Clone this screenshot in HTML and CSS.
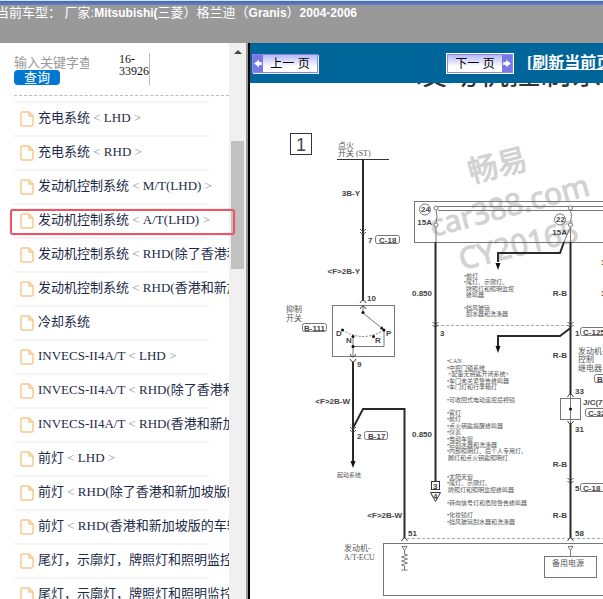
FILE: index.html
```html
<!DOCTYPE html>
<html lang="zh-CN">
<head>
<meta charset="utf-8">
<title>发动机控制系统</title>
<link rel="stylesheet" href="styles.css">
</head>
<body>
<header class="top">
  <h1 class="vehicle">当前车型： 厂家:<strong>Mitsubishi(</strong>三菱）格兰迪（<strong>Granis</strong>）<strong>2004-2006</strong></h1>
</header>
<div class="frames">
  <aside class="sidebar">
    <div class="panel">
      <form class="search">
        <div class="fields">
          <input class="keyword" type="text" placeholder="输入关键字查询" aria-label="关键字">
          <button class="submit" type="button">查询</button>
        </div>
        <p class="code">16-<br>33926</p>
      </form>
      <svg class="defs" width="0" height="0" aria-hidden="true">
        <symbol id="page" viewBox="0 0 14 16"><path d="M2.500 1H9l4 4v8.500a1.500 1.500 0 0 1-1.500 1.500h-9A1.500 1.500 0 0 1 1 13.500v-11A1.500 1.500 0 0 1 2.500 1zM9 1v4h4" fill="none" stroke="#f8c98e" stroke-width="1.500"/></symbol>
      </svg>
      <ul class="list">
        <li><a href="#"><svg class="icon"><use href="#page"/></svg>充电系统 <i>&lt;</i> LHD <i>&gt;</i></a></li>
        <li><a href="#"><svg class="icon"><use href="#page"/></svg>充电系统 <i>&lt;</i> RHD <i>&gt;</i></a></li>
        <li><a href="#"><svg class="icon"><use href="#page"/></svg>发动机控制系统 <i>&lt;</i> M/T(LHD) <i>&gt;</i></a></li>
        <li class="marked"><a href="#"><svg class="icon"><use href="#page"/></svg>发动机控制系统 <i>&lt;</i> A/T(LHD) <i>&gt;</i></a></li>
        <li><a href="#"><svg class="icon"><use href="#page"/></svg>发动机控制系统 <i>&lt;</i> RHD(除了香港和新加坡版的车辆)</a></li>
        <li><a href="#"><svg class="icon"><use href="#page"/></svg>发动机控制系统 <i>&lt;</i> RHD(香港和新加坡版的车辆)</a></li>
        <li><a href="#"><svg class="icon"><use href="#page"/></svg>冷却系统</a></li>
        <li><a href="#"><svg class="icon"><use href="#page"/></svg>INVECS-II4A/T <i>&lt;</i> LHD <i>&gt;</i></a></li>
        <li><a href="#"><svg class="icon"><use href="#page"/></svg>INVECS-II4A/T <i>&lt;</i> RHD(除了香港和新加坡版的车辆)</a></li>
        <li><a href="#"><svg class="icon"><use href="#page"/></svg>INVECS-II4A/T <i>&lt;</i> RHD(香港和新加坡版的车辆)</a></li>
        <li><a href="#"><svg class="icon"><use href="#page"/></svg>前灯 <i>&lt;</i> LHD <i>&gt;</i></a></li>
        <li><a href="#"><svg class="icon"><use href="#page"/></svg>前灯 <i>&lt;</i> RHD(除了香港和新加坡版的车辆)</a></li>
        <li><a href="#"><svg class="icon"><use href="#page"/></svg>前灯 <i>&lt;</i> RHD(香港和新加坡版的车辆)</a></li>
        <li><a href="#"><svg class="icon"><use href="#page"/></svg>尾灯，示廓灯，牌照灯和照明监控</a></li>
        <li><a href="#"><svg class="icon"><use href="#page"/></svg>尾灯，示廓灯，牌照灯和照明监控</a></li>
      </ul>
    </div>
    <div class="scrollbar"><span class="arrow"></span><span class="thumb"></span></div>
  </aside>
  <main class="viewer">
    <nav class="toolbar">
      <a class="pager prev" href="#"><svg class="tip" viewBox="0 0 10 18"><path d="M1 9l5-4v2.500h3v3H6V13z" fill="#fff"/></svg><span>上一 页</span></a>
      <a class="pager next" href="#"><span>下一 页</span><svg class="tip" viewBox="0 0 10 18"><path d="M9 9L4 5v2.500H1v3h3V13z" fill="#fff"/></svg></a>
      <a class="refresh" href="#">[刷新当前页]</a>
    </nav>
    <svg class="diagram" viewBox="250 83 353 516" role="img" aria-label="发动机控制系统电路图">
      <defs>
        <g id="joint"><path d="M-3-3Q0 1 3-3M-3 0Q0 4 3 0" fill="none"/></g>
        <g id="plug"><path d="M-3 2Q0-4 3 2" fill="none"/></g>
        <g id="socket"><path d="M-3-2Q0 4 3-2" fill="none"/></g>
        <path id="head" d="M-2.500 0h5L0 7z"/>
      </defs>
      <text class="title" x="416" y="84">发动机控制系统</text>

      <g class="watermark">
        <text transform="translate(471 183) rotate(-14)">畅易</text>
        <text transform="translate(433 237) rotate(-15)">car388.com</text>
        <text transform="translate(462 270) rotate(-14)">CY20165</text>
      </g>

      <g class="thin">
        <rect class="rule" x="290.500" y="133.500" width="21" height="21"/>
        <path class="rule" d="M337 159.500h52"/>
        <rect x="332.500" y="305.500" width="62" height="51"/>
        <path d="M363 305v8l21 17v16.500h-31M353 336v21"/>
        <path stroke-dasharray="2 1.500" d="M342.500 330Q363 343 384 330"/>
        <rect x="414.500" y="201.500" width="200" height="41"/>
        <path d="M438 206.500h170M438 210.500h170M436 210q2 6 0 12.500M570.500 210q2 6 0 12.500M436 227v15M570.500 227v15M570 228l-6 14"/>
        <path class="dash" d="M436 325.500h134M407 538.500h200"/>
        <rect x="383.500" y="543.500" width="230" height="52"/>
        <rect x="544.500" y="556.500" width="52" height="21"/>
        <rect x="560.500" y="398.500" width="20" height="21"/>
        <path d="M570.500 395v28M570.500 550v6"/>
        <path d="M402 546.500h5l-2.500 4zM404.500 550v4l3 1-6 2 6 2-6 2 6 2-6 2 3 1v4M401.500 570h6M568 546.500h5l-2.500 4z"/>
        <rect class="rule" x="431.500" y="481.500" width="8" height="8"/>
        <path class="rule" d="M430.500 492.500h10l-5 9z"/>
        <circle cx="425" cy="209.500" r="5.500"/><circle cx="560" cy="219.500" r="5.500"/>
        <g class="blank"><circle cx="436" cy="208" r="2"/><circle cx="436" cy="225" r="2"/><circle cx="570.500" cy="208" r="2"/><circle cx="570.500" cy="225" r="2"/></g>
        <rect x="375.500" y="235.500" width="24" height="8" rx="2"/>
        <rect x="302.500" y="323.500" width="24" height="8" rx="2"/>
        <rect x="364.500" y="431.500" width="23" height="8" rx="2"/>
        <rect x="580.500" y="327.500" width="30" height="8" rx="2"/>
        <rect x="594.500" y="374.500" width="30" height="8" rx="2"/>
        <rect x="585.500" y="408.500" width="30" height="8" rx="2"/>
        <rect x="580.500" y="483.500" width="30" height="8" rx="2"/>
      </g>
      <g class="thick">
        <path d="M363 160v141M353 362v100M353 428l10-19h41.500v129M435.500 242v239M570.500 242v153M570.500 423v115"/>
        <path d="M564 242l-4 11h-62v9M570.500 328l-10.500 8h-62v12"/>
      </g>
      <g class="solid">
        <use href="#head" x="353" y="461"/><use href="#head" x="498" y="263"/><use href="#head" x="498" y="346"/>
        <circle cx="363" cy="312.500" r="1.500"/><circle cx="384" cy="330" r="1.500"/><circle cx="342.500" cy="330" r="1.500"/><circle cx="353" cy="336.500" r="1.500"/><circle cx="373.500" cy="336.500" r="1.500"/><circle cx="353" cy="346.500" r="1.500"/><circle cx="570.500" cy="409" r="1.500"/>
        <path d="M384 330l-4-1 2-3z"/>
      </g>
      <g class="marks">
        <use href="#joint" x="363" y="232"/><use href="#joint" x="353" y="430"/><use href="#joint" x="435.500" y="325"/><use href="#joint" x="570.500" y="325"/><use href="#joint" x="570.500" y="481"/>
        <use href="#plug" x="363" y="301"/><use href="#plug" x="363" y="307"/><use href="#socket" x="353" y="356"/><use href="#socket" x="353" y="361"/>
        <use href="#plug" x="404.500" y="539"/><use href="#plug" x="570.500" y="539"/><use href="#plug" x="570.500" y="395"/><use href="#socket" x="570.500" y="423"/>
      </g>

      <g class="wire">
        <text class="sheet" x="296" y="151">1</text>
        <text x="368" y="243">7</text><text x="379" y="243">C-18</text>
        <text x="367" y="301">10</text>
        <text x="304" y="331">B-111</text><text x="336" y="336">D</text><text x="346" y="343">N</text><text x="375" y="343">R</text><text x="386" y="336">P</text>
        <text x="357" y="367">9</text><text x="357" y="439">2</text><text x="368" y="439">B-17</text>
        <text x="408" y="536">51</text>
        <text x="421" y="212">24</text><text x="556" y="222">22</text>
        <text x="440" y="336">3</text><text x="433" y="489">3</text><text x="433" y="499">4</text>
        <text x="601" y="265">1</text><text x="601" y="296">1</text><text x="575" y="336">1</text><text x="583" y="335">C-125</text><text x="597" y="382">B-2</text>
        <text x="575" y="394">33</text><text x="583" y="405">J/C(7)</text><text x="588" y="416">C-32</text><text x="575" y="432">31</text>
        <text x="575" y="491">5</text><text x="583" y="491">C-18</text><text x="575" y="536">58</text>
        <g class="before">
          <text x="360" y="196">3B-Y</text><text x="360" y="274">&lt;F&gt;2B-Y</text><text x="350" y="404">&lt;F&gt;2B-W</text><text x="402" y="518">&lt;F&gt;2B-W</text>
          <text x="432" y="225">15A</text><text x="567" y="235">15A</text><text x="432" y="296">0.850</text><text x="432" y="437">0.850</text>
          <text x="567" y="296">R-B</text><text x="567" y="358">R-B</text><text x="567" y="467">R-B</text><text x="567" y="518">R-B</text>
        </g>
      </g>
      <g class="label">
        <text x="338" y="148">点火</text><text x="338" y="156">开关 (ST)</text>
        <text x="286" y="312">抑制</text><text x="286" y="321">开关</text>
        <text x="344" y="551">发动机-</text><text x="344" y="560">A/T-ECU</text>
        <text x="578" y="354">发动机-</text><text x="578" y="362">控制</text><text x="578" y="371">继电器</text>
        <text x="552" y="566">备用电源</text>
      </g>
      <g class="note">
        <text x="337" y="477">起动系统</text>
        <text x="464" y="278">•前灯</text><text x="464" y="284">•尾灯、示廓灯、</text><text x="466" y="291">牌照灯和照明监控</text><text x="466" y="297">蜂鸣器</text>
        <text x="464" y="310">•挡风玻璃</text><text x="466" y="316">刮水器和洗涤器</text>
        <text x="447" y="363">•CAN</text><text x="447" y="370">•中控门锁系统</text><text x="448" y="376">&lt;配备无钥匙开闭系统&gt;</text><text x="447" y="383">•车门未关紧警告蜂鸣器</text><text x="447" y="389">•车门灯和行李箱灯</text>
        <text x="447" y="402">•可收回式电动遥控后视镜</text>
        <text x="447" y="415">•雾灯</text><text x="447" y="421">•前灯</text><text x="447" y="428">•点火钥匙提醒蜂鸣器</text><text x="447" y="434">•仪表</text><text x="447" y="441">•电动车窗</text><text x="447" y="447">•后刮水器和洗涤器</text><text x="447" y="453">•内部照明灯、后个人专用灯、</text><text x="448" y="460">脚灯和点火钥匙照明灯</text>
        <text x="447" y="479">•太阳天窗</text><text x="447" y="485">•尾灯、示廓灯、</text><text x="448" y="492">牌照灯和照明监控蜂鸣器</text>
        <text x="447" y="505">•转向信号灯和危险警告蜂鸣器</text>
        <text x="447" y="517">•化妆镜灯</text><text x="447" y="524">•挡风玻璃刮水器和洗涤器</text>
      </g>
    </svg>
  </main>
</div>
</body>
</html>
```
FILE: styles.css
```css
* { box-sizing: border-box; }

body {
  margin: 0;
  height: 100vh;
  display: flex;
  flex-direction: column;
  overflow: hidden;
  background: #fff;
  font-family: "Liberation Serif", "Noto Sans CJK SC", serif;
}

.top {
  flex: none;
  height: 43px;
  border-top: 1px solid #d5e2f5;
  background: linear-gradient(#4468b4, #6482c4) no-repeat 0 0 / 100% 4px, #999;
  overflow: hidden;
}

.vehicle {
  margin: 4px 0 0 -4px;
  color: #fff;
  font: 13px/16px "Liberation Sans", "Noto Sans CJK SC", sans-serif;
  white-space: nowrap;
}

.vehicle strong { font-size: 12px; }

.frames {
  flex: 1;
  min-height: 0;
  display: flex;
}

.sidebar {
  flex: none;
  width: 250px;
  display: flex;
  overflow: hidden;
  border-right: 2px solid #000;
}

.panel {
  flex: 1;
  min-width: 0;
  padding: 10px 0 0 14px;
}

.search {
  display: flex;
  gap: 30px;
  height: 43px;
  border-bottom: 1px dashed #bbb;
}

.fields { width: 75px; }

.keyword {
  display: block;
  width: 100%;
  height: 17px;
  padding: 2px 0 0;
  border: 0;
  outline: 0;
  font: 13px/16px "Liberation Sans", "Noto Sans CJK SC", sans-serif;
}

.keyword::placeholder { color: #999; }

.submit {
  display: block;
  width: 46px;
  height: 15px;
  padding: 0;
  border: 0;
  border-radius: 4px;
  background: #0078d2;
  color: #fff;
  font: 13px/15px "Liberation Sans", "Noto Sans CJK SC", sans-serif;
}

.code {
  margin: 0;
  height: 32px;
  border-right: 1px solid #bbb;
  color: #111;
  font-size: 12px;
  line-height: 12px;
}

.defs { display: block; }

.list {
  margin: 5px 0 0;
  padding: 0;
  list-style: none;
}

.list li {
  position: relative;
  height: 34px;
  background: linear-gradient(#f4f4f4, #f4f4f4) no-repeat 0 0 / calc(100% - 20px) 2px;
}

.list a {
  display: block;
  height: 34px;
  padding-left: 6px;
  overflow: hidden;
  color: #1c2a48;
  font-size: 13px;
  line-height: 34px;
  text-decoration: none;
  white-space: nowrap;
}

.list i {
  color: #8a8f98;
  font-style: normal;
}

.icon {
  width: 14px;
  height: 16px;
  margin-right: 4px;
  vertical-align: middle;
}

.marked::after {
  content: "";
  position: absolute;
  inset: 6px -6px 2px -4px;
  z-index: 1;
  border: 2px solid #ec5563;
  border-radius: 3px;
  box-shadow: 0 0 1px #ec5563;
  pointer-events: none;
}

.scrollbar {
  flex: none;
  width: 19px;
  padding: 7px 2px 0;
  border-right: 2px solid #999;
  background: #f0f0f0;
}

.arrow {
  display: block;
  width: 8px;
  margin: 0 auto;
  border: 4px solid transparent;
  border-top-width: 0;
  border-bottom-color: #444;
}

.thumb {
  display: block;
  height: 128px;
  margin-top: 87px;
  background: #c1c1c1;
}

.viewer {
  flex: 1;
  min-width: 0;
  overflow: hidden;
}

.toolbar {
  display: flex;
  align-items: center;
  height: 40px;
  padding-left: 2px;
  background: #069;
  white-space: nowrap;
  overflow: hidden;
}

.pager {
  flex: none;
  display: flex;
  width: 66px;
  height: 19px;
  border: 1px solid #8a8ad8;
  background: linear-gradient(#b8b8f8, #fff 70%);
  box-shadow: 1px 1px 0 #e8e8ff;
  color: #000;
  font: 12px/18px "Liberation Sans", "Noto Sans CJK SC", sans-serif;
  text-decoration: none;
}

.pager span {
  flex: 1;
  text-align: center;
}

.tip {
  width: 10px;
  height: 17px;
  background: #7878e8;
}

.next {
  margin-left: 129px;
  outline: 1px solid #fff;
}

.refresh {
  margin-left: 14px;
  color: #fff;
  font: bold 16px/20px "Liberation Serif", "Noto Sans CJK SC", serif;
}

.diagram {
  display: block;
  width: 100%;
  height: auto;
}

.title {
  fill: #333;
  font: 31px "Noto Sans CJK SC", sans-serif;
}

.thin {
  fill: none;
  stroke: #777;
  stroke-width: 1px;
}

.rule { stroke: #333; }
.dash { stroke: #aaa; stroke-dasharray: 3 2; }
.blank { fill: #fff; }
.thick { fill: none; stroke: #2a2a2a; stroke-width: 2px; }
.solid { fill: #111; }
.marks { stroke: #444; stroke-width: 1px; }

.wire {
  fill: #444;
  font: bold 8px "Liberation Sans", sans-serif;
}

.before { text-anchor: end; }

.sheet { font-size: 18px; font-weight: normal; }

.label {
  fill: #555;
  font: 8px "Liberation Serif", "Noto Sans CJK SC", serif;
}

.note {
  fill: #555;
  font: 6px "Liberation Serif", "Noto Sans CJK SC", serif;
}

.watermark {
  fill: #d2d2d2;
  stroke: #d2d2d2;
  stroke-width: 1px;
  font: 30px "Noto Sans", "Noto Sans CJK SC", sans-serif;
}
```
